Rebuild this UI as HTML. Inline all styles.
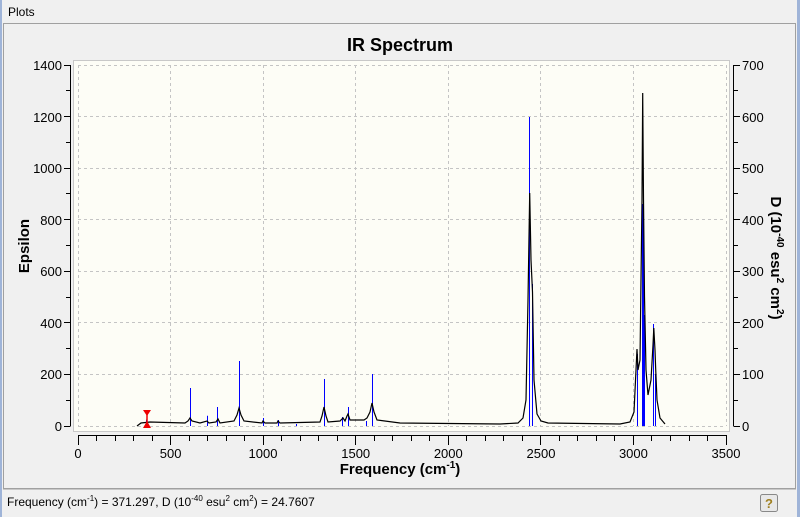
<!DOCTYPE html>
<html><head><meta charset="utf-8"><style>
html,body{margin:0;padding:0;width:800px;height:517px;overflow:hidden;background:#f0f0f0;font-family:"Liberation Sans",sans-serif}
</style></head><body>
<svg width="800" height="517" xmlns="http://www.w3.org/2000/svg" style="position:absolute;left:0;top:0" font-family="Liberation Sans, sans-serif">
<rect x="0" y="0" width="800" height="517" fill="#f0f0f0"/>
<rect x="0" y="0" width="2" height="517" fill="#9fb4d8"/>
<rect x="797" y="0" width="3" height="517" fill="#9fb4d8"/>
<text x="8" y="16" font-size="12" fill="#000">Plots</text>
<rect x="3.5" y="23.5" width="792" height="465" fill="#f0f0f0" stroke="#a0a0a0"/>
<text x="400" y="51" font-size="18" font-weight="bold" text-anchor="middle">IR Spectrum</text>
<rect x="73.5" y="60.5" width="656" height="371" fill="#fdfdf6" stroke="#c8c8c8"/>
<path stroke="#c4c4c4" stroke-dasharray="3,3" fill="none" d="M78.5 65V426M170.5 65V426M263.5 65V426M355.5 65V426M448.5 65V426M540.5 65V426M633.5 65V426M726.5 65V426M78 426.5H726M78 374.5H726M78 322.5H726M78 271.5H726M78 219.5H726M78 168.5H726M78 116.5H726M78 65.5H726"/>
<path stroke="#000" fill="none" d="M70.5 65V426M733.5 65V426M78 435.5H726
M64 426.5H70.5M66 400.5H70.5M64 374.5H70.5M66 348.5H70.5M64 322.5H70.5M66 297.5H70.5M64 271.5H70.5M66 245.5H70.5M64 219.5H70.5M66 193.5H70.5M64 168.5H70.5M66 142.5H70.5M64 116.5H70.5M66 90.5H70.5M64 65.5H70.5
M733.5 426.5H740M733.5 400.5H738M733.5 374.5H740M733.5 348.5H738M733.5 322.5H740M733.5 297.5H738M733.5 271.5H740M733.5 245.5H738M733.5 219.5H740M733.5 193.5H738M733.5 168.5H740M733.5 142.5H738M733.5 116.5H740M733.5 90.5H738M733.5 65.5H740
M78.5 435V445M96.5 435V441M115.5 435V441M133.5 435V441M152.5 435V441M170.5 435V445M189.5 435V441M207.5 435V441M226.5 435V441M244.5 435V441M263.5 435V445M281.5 435V441M300.5 435V441M318.5 435V441M337.5 435V441M355.5 435V445M374.5 435V441M392.5 435V441M411.5 435V441M429.5 435V441M448.5 435V445M466.5 435V441M485.5 435V441M503.5 435V441M522.5 435V441M540.5 435V445M559.5 435V441M577.5 435V441M596.5 435V441M614.5 435V441M633.5 435V445M651.5 435V441M670.5 435V441M689.5 435V441M707.5 435V441M726.5 435V445"/>
<g font-size="13" fill="#000" text-anchor="end">
<text x="62" y="431">0</text><text x="62" y="379">200</text><text x="62" y="328">400</text><text x="62" y="276">600</text><text x="62" y="225">800</text><text x="62" y="173">1000</text><text x="62" y="122">1200</text><text x="62" y="70">1400</text>
</g>
<g font-size="13" fill="#000">
<text x="742" y="431">0</text><text x="742" y="379">100</text><text x="742" y="328">200</text><text x="742" y="276">300</text><text x="742" y="225">400</text><text x="742" y="173">500</text><text x="742" y="122">600</text><text x="742" y="70">700</text>
</g>
<g font-size="13" fill="#000" text-anchor="middle">
<text x="78" y="458">0</text><text x="170.6" y="458">500</text><text x="263" y="458">1000</text><text x="355.7" y="458">1500</text><text x="448.3" y="458">2000</text><text x="541" y="458">2500</text><text x="633.4" y="458">3000</text><text x="726" y="458">3500</text>
</g>
<path stroke="#0000ff" fill="none" d="M146.5 426V419.6M190.5 426V388M207.5 426V415.7M217.5 426V407M239.5 426V361M263.5 426V418M278.5 426V420M296.5 426V424M324.5 426V379M342.5 426V417M348.5 426V407M366.5 426V421M372.5 426V374M529.5 426V117M532.5 426V284M637.5 426V354M642.5 426V204M644.5 426V315M653.5 426V324M655.5 426V374"/>
<path stroke="#0000ff" stroke-width="2" fill="none" d="M643 426V204"/>
<path stroke="#000" stroke-width="1.2" fill="none" d="M137 426 L141 423 L150 422 L185 423 L188 421 L190 418 L192 421 L200 423 L207 421 L209 423 L216 422 L218 419 L220 423 L234 421 L237 415 L239 408 L241 415 L244 421 L262 423 L263 421 L265 423 L277 423 L278 421 L280 423 L320 422 L322 416 L324 407 L326 416 L328 422 L340 421 L343 418 L345 421 L347 416 L348 414 L350 420 L364 420 L367 418 L370 412 L372 403 L374 412 L377 420 L400 423 L500 424 L518 423 L523 418 L526 400 L528 300 L529.7 193 L531 260 L532.5 292 L534 380 L537 414 L541 421 L548 423 L620 424 L630 422 L634 412 L636 370 L637 349 L638 370 L640 360 L642 200 L642.7 93 L643.5 200 L644.5 297 L646 370 L648 395 L651 380 L653 345 L653.8 328 L655 350 L655.6 367 L657 400 L660 418 L665 424"/>
<path d="M143 410 L151 410 L147 416 Z M143 428 L151 428 L147 421 Z" fill="#e00"/>
<line x1="147" y1="414" x2="147" y2="424" stroke="#e00" stroke-width="1.5"/>
<text x="400" y="474" font-size="15" font-weight="bold" text-anchor="middle">Frequency (cm<tspan font-size="10" dy="-6">-1</tspan><tspan dy="6">)</tspan></text>
<text transform="translate(29,246) rotate(-90)" font-size="15" font-weight="bold" text-anchor="middle">Epsilon</text>
<text transform="translate(771,258) rotate(90)" font-size="15" font-weight="bold" text-anchor="middle">D (10<tspan font-size="10" dy="-6">-40</tspan><tspan dy="6"> esu</tspan><tspan font-size="10" dy="-6">2</tspan><tspan dy="6"> cm</tspan><tspan font-size="10" dy="-6">2</tspan><tspan dy="6">)</tspan></text>
<line x1="3" y1="489.5" x2="796" y2="489.5" stroke="#c8c8c8"/>
<text x="7" y="506" font-size="12">Frequency (cm<tspan font-size="8" dy="-5">-1</tspan><tspan dy="5">) = 371.297, D (10</tspan><tspan font-size="8" dy="-5">-40</tspan><tspan dy="5"> esu</tspan><tspan font-size="8" dy="-5">2</tspan><tspan dy="5"> cm</tspan><tspan font-size="8" dy="-5">2</tspan><tspan dy="5">) = 24.7607</tspan></text>
<rect x="760.5" y="494.5" width="17" height="17" rx="2" fill="#e8e8e8" stroke="#888"/>
<text x="769" y="508" font-size="13" font-weight="bold" text-anchor="middle" fill="#a08020">?</text>
</svg>
</body></html>
